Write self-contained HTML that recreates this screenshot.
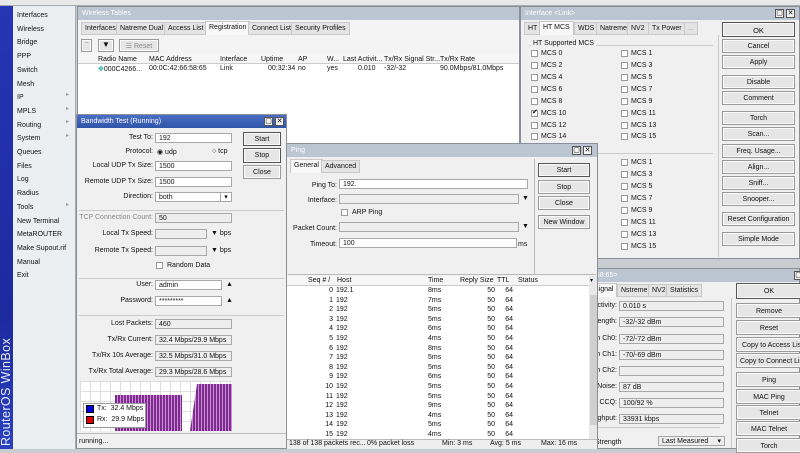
<!DOCTYPE html>
<html><head><meta charset="utf-8"><style>
*{box-sizing:border-box;margin:0;padding:0}
body{width:800px;height:449px;overflow:hidden;background:#c9ccd1;font-family:"Liberation Sans",sans-serif;font-size:7px;color:#111;position:relative}
.a{position:absolute;white-space:nowrap}
.win{position:absolute;background:#f0f0f0;border:1px solid #8a8f98}
.tt{position:absolute;left:0;right:0;top:0;height:13px;background:#bcc5d2;color:#fff;padding:3px 4px;font-size:7px}
.tt.act{background:linear-gradient(#4a6ec4,#2f55a8)}
.tb{position:absolute;top:2px;width:9px;height:9px;background:#f4f4f4;border:1px solid #555;font-size:7px;line-height:7px;text-align:center;color:#000}
.btn{position:absolute;background:#e6e6e6;border:1px solid #9a9a9a;text-align:center;font-size:7px;box-shadow:inset 0 0 0 1px #fafafa;white-space:nowrap;overflow:hidden}
.f{position:absolute;background:#fff;border:1px solid #a8a8a8;height:10px;padding:1px 3px;font-size:7px;line-height:7px;white-space:nowrap}
.d{background:#eeeeee}
.l{position:absolute;text-align:right;font-size:7px;white-space:nowrap}
.cb{position:absolute;width:7px;height:7px;background:#fff;border:1px solid #9a9a9a}
.tab{position:absolute;font-size:7px;padding:2px 3px;border:1px solid #c8c8c8;background:#e4e4e4;height:13px;white-space:nowrap}
.tab.on{background:#f8f8f8;border-bottom:none}
.hdr{position:absolute;background:#f6f6f6;border-bottom:1px solid #ccc;height:10px}
</style></head><body>
<div class="a" style="left:0;top:0;width:800px;height:6px;background:#e8e8e8;border-bottom:1px solid #aaa"></div>
<div class="a" style="left:0;top:6px;width:13px;height:443px;background:linear-gradient(180deg,#2535b5,#1c2a9e 70%,#2a40c0)"></div>
<div class="a" style="left:0;top:446px;transform:rotate(-90deg);transform-origin:0 0;color:#e8ecff;font-size:12.5px;line-height:12px;letter-spacing:0.4px">RouterOS WinBox</div>
<div class="a" style="left:13px;top:6px;width:63px;height:443px;background:#eceff2;border-right:1px solid #aaa"></div>
<div class="a" style="left:17px;top:9px;line-height:13.7px;font-size:7px">Interfaces<br>Wireless<br>Bridge<br>PPP<br>Switch<br>Mesh<br>IP<br>MPLS<br>Routing<br>System<br>Queues<br>Files<br>Log<br>Radius<br>Tools<br>New Terminal<br>MetaROUTER<br>Make Supout.rif<br>Manual<br>Exit</div>
<div class="a" style="left:66px;top:89px;line-height:13.7px;color:#999;font-size:6px">▸<br>▸<br>▸<br>▸<br><br><br><br><br>▸</div>

<div class="win" style="left:77px;top:6px;width:443px;height:140px;background:#f4f4f4">
<div class="tt">Wireless Tables</div>
<div class="tab" style="left:3px;top:15px">Interfaces</div>
<div class="tab" style="left:38px;top:15px">Natreme Dual</div>
<div class="tab" style="left:86px;top:15px">Access List</div>
<div class="tab on" style="left:127px;top:14px;height:14px">Registration</div>
<div class="tab" style="left:170px;top:15px">Connect List</div>
<div class="tab" style="left:213px;top:15px">Security Profiles</div>
<div class="btn" style="left:3px;top:32px;width:11px;height:13px;color:#999">−</div>
<div class="btn" style="left:20px;top:32px;width:16px;height:13px;font-size:8px">▼</div>
<div class="btn" style="left:41px;top:32px;width:40px;height:13px;color:#888;padding-top:2px">☰ Reset</div>
<div class="hdr" style="left:0;top:47px;width:441px"></div>
<div class="a" style="left:20px;top:49px">Radio Name</div><div class="a" style="left:71px;top:49px">MAC Address</div><div class="a" style="left:142px;top:49px">Interface</div><div class="a" style="left:183px;top:49px">Uptime</div><div class="a" style="left:220px;top:49px">AP</div><div class="a" style="left:249px;top:49px">W...</div><div class="a" style="left:265px;top:49px">Last Activit...</div><div class="a" style="left:306px;top:49px">Tx/Rx Signal Str...</div><div class="a" style="left:362px;top:49px">Tx/Rx Rate</div>
<div class="a" style="left:0;top:57px;width:441px;height:10px;background:#fff"></div>
<div class="a" style="left:20px;top:58px"><span style="color:#1a9">✥</span>000C4266...</div><div class="a" style="left:71px;top:58px">00:0C:42:66:58:65</div><div class="a" style="left:142px;top:58px">Link</div><div class="a" style="left:190px;top:58px">00:32:34</div><div class="a" style="left:220px;top:58px">no</div><div class="a" style="left:249px;top:58px">yes</div><div class="a" style="left:280px;top:58px">0.010</div><div class="a" style="left:306px;top:58px">-32/-32</div><div class="a" style="left:362px;top:58px">90.0Mbps/81.0Mbps</div>
<div class="a" style="left:0;top:67px;width:441px;height:71px;background:#fff"></div>
</div>

<div class="win" style="left:520px;top:6px;width:280px;height:253px">
<div class="tt">Interface &lt;Link&gt;</div><div class="tb" style="left:254px">▢</div><div class="tb" style="left:265px">✕</div>
<div class="tab" style="left:3px;top:15px">HT</div><div class="tab on" style="left:18px;top:14px;height:14px">HT MCS</div><div class="tab" style="left:53px;top:15px">WDS</div><div class="tab" style="left:75px;top:15px">Natreme</div><div class="tab" style="left:106px;top:15px">NV2</div><div class="tab" style="left:127px;top:15px">Tx Power</div><div class="tab" style="left:163px;top:15px;color:#999">...</div>
<div class="a" style="left:8px;top:38px;width:184px;border-top:1px solid #ccc"></div>
<div class="a" style="left:10px;top:33px;background:#f0f0f0;padding:0 2px">HT Supported MCS</div>
<div class="a" style="left:8px;top:146px;width:184px;border-top:1px solid #ccc"></div>
<div class="a" style="left:197px;top:28px;height:222px;border-left:1px solid #ccc"></div>
</div>
<div id="mcs"></div>

<div class="btn" style="left:722px;top:22px;width:73px;height:15px;padding-top:3px;border-color:#555;font-size:7.5px">OK</div>
<div class="btn" style="left:722px;top:39px;width:73px;height:14px;padding-top:3px">Cancel</div>
<div class="btn" style="left:722px;top:55px;width:73px;height:14px;padding-top:3px">Apply</div>
<div class="btn" style="left:722px;top:75px;width:73px;height:14px;padding-top:3px">Disable</div>
<div class="btn" style="left:722px;top:91px;width:73px;height:14px;padding-top:3px">Comment</div>
<div class="btn" style="left:722px;top:111px;width:73px;height:14px;padding-top:3px">Torch</div>
<div class="btn" style="left:722px;top:127px;width:73px;height:14px;padding-top:3px">Scan...</div>
<div class="btn" style="left:722px;top:144px;width:73px;height:14px;padding-top:3px">Freq. Usage...</div>
<div class="btn" style="left:722px;top:160px;width:73px;height:14px;padding-top:3px">Align...</div>
<div class="btn" style="left:722px;top:176px;width:73px;height:14px;padding-top:3px">Sniff...</div>
<div class="btn" style="left:722px;top:192px;width:73px;height:14px;padding-top:3px">Snooper...</div>
<div class="btn" style="left:722px;top:212px;width:73px;height:14px;padding-top:3px">Reset Configuration</div>
<div class="btn" style="left:722px;top:232px;width:73px;height:14px;padding-top:3px">Simple Mode</div>

<div class="win" style="left:585px;top:268px;width:215px;height:181px">
<div class="tt">...58:65&gt;</div><div class="tb" style="left:208px">▢</div>
<div class="tab on" style="left:4px;top:14px;height:14px">Signal</div><div class="tab" style="left:31px;top:15px">Nstreme</div><div class="tab" style="left:62px;top:15px">NV2</div><div class="tab" style="left:80px;top:15px">Statistics</div>
<div class="a" style="left:145px;top:29px;height:150px;border-left:1px solid #ccc"></div>
</div>
<div class="l" style="left:560px;top:302px;width:57px">Activity:</div><div class="f d" style="left:619px;top:301px;width:105px">0.010 s</div>
<div class="l" style="left:560px;top:318px;width:57px">Strength:</div><div class="f d" style="left:619px;top:317px;width:105px">-32/-32 dBm</div>
<div class="l" style="left:560px;top:335px;width:57px">Strength Ch0:</div><div class="f d" style="left:619px;top:334px;width:105px">-72/-72 dBm</div>
<div class="l" style="left:560px;top:351px;width:57px">Strength Ch1:</div><div class="f d" style="left:619px;top:350px;width:105px">-70/-69 dBm</div>
<div class="l" style="left:560px;top:367px;width:57px">Strength Ch2:</div><div class="f d" style="left:619px;top:366px;width:105px"></div>
<div class="l" style="left:560px;top:383px;width:57px">Noise:</div><div class="f d" style="left:619px;top:382px;width:105px">87 dB</div>
<div class="l" style="left:560px;top:399px;width:57px">Tx/Rx CCQ:</div><div class="f d" style="left:619px;top:398px;width:105px">100/92 %</div>
<div class="l" style="left:560px;top:415px;width:57px">Throughput:</div><div class="f d" style="left:619px;top:414px;width:105px">33931 kbps</div>
<div class="a" style="left:590px;top:427px;width:130px;border-top:1px solid #ccc"></div>
<div class="a" style="left:595px;top:439px">Strength</div>
<div class="f d" style="left:658px;top:436px;width:67px">Last Measured <span style="float:right">▾</span></div>
<div class="btn" style="left:736px;top:283px;width:66px;height:16px;padding-top:4px;border-color:#555">OK</div>
<div class="btn" style="left:736px;top:303px;width:66px;height:15px;padding-top:4px">Remove</div>
<div class="btn" style="left:736px;top:320px;width:66px;height:15px;padding-top:4px">Reset</div>
<div class="btn" style="left:736px;top:337px;width:66px;height:15px;padding-top:4px;text-align:left;padding-left:5px">Copy to Access List</div>
<div class="btn" style="left:736px;top:353px;width:66px;height:15px;padding-top:4px;text-align:left;padding-left:3px">Copy to Connect List</div>
<div class="btn" style="left:736px;top:372px;width:66px;height:15px;padding-top:4px">Ping</div>
<div class="btn" style="left:736px;top:389px;width:66px;height:15px;padding-top:4px">MAC Ping</div>
<div class="btn" style="left:736px;top:405px;width:66px;height:15px;padding-top:4px">Telnet</div>
<div class="btn" style="left:736px;top:421px;width:66px;height:15px;padding-top:4px">MAC Telnet</div>
<div class="btn" style="left:736px;top:438px;width:66px;height:15px;padding-top:4px">Torch</div>

<div class="win" style="left:286px;top:143px;width:312px;height:306px">
<div class="tt">Ping</div><div class="tb" style="left:285px">▢</div><div class="tb" style="left:296px">✕</div>
<div class="tab on" style="left:3px;top:15px;height:14px">General</div><div class="tab" style="left:34px;top:16px">Advanced</div>
<div class="a" style="left:247px;top:15px;height:115px;border-left:1px solid #bbb"></div>
<div class="a" style="left:1px;top:130px;width:308px;border-top:1px solid #bbb"></div>
</div>
<div class="l" style="left:290px;top:182px;width:47px">Ping To:</div><div class="f" style="left:339px;top:179px;width:189px">192.</div>
<div class="l" style="left:290px;top:197px;width:47px">Interface:</div><div class="f d" style="left:339px;top:194px;width:180px"></div><div class="a" style="left:522px;top:195px">▼</div>
<div class="cb" style="left:341px;top:209px"></div><div class="a" style="left:352px;top:209px">ARP Ping</div>
<div class="l" style="left:287px;top:225px;width:50px">Packet Count:</div><div class="f d" style="left:339px;top:222px;width:180px"></div><div class="a" style="left:522px;top:223px">▼</div>
<div class="l" style="left:290px;top:241px;width:47px">Timeout:</div><div class="f" style="left:339px;top:238px;width:178px">100</div><div class="a" style="left:518px;top:241px">ms</div>
<div class="btn" style="left:538px;top:163px;width:52px;height:14px;padding-top:3px;border-color:#555">Start</div>
<div class="btn" style="left:538px;top:180px;width:52px;height:14px;padding-top:3px">Stop</div>
<div class="btn" style="left:538px;top:196px;width:52px;height:14px;padding-top:3px">Close</div>
<div class="btn" style="left:538px;top:215px;width:52px;height:14px;padding-top:3px">New Window</div>
<div class="a" style="left:287px;top:276px;width:310px;height:163px;background:#fff"></div>
<div class="hdr" style="left:287px;top:276px;width:302px"></div>
<div class="a" style="left:308px;top:277px">Seq # /</div><div class="a" style="left:337px;top:277px">Host</div><div class="a" style="left:428px;top:277px">Time</div><div class="a" style="left:460px;top:277px">Reply Size</div><div class="a" style="left:497px;top:277px">TTL</div><div class="a" style="left:518px;top:277px">Status</div>
<div class="a" style="left:589px;top:276px;width:8px;height:163px;background:#e8e8e8"></div>
<div class="a" style="left:590px;top:295px;width:7px;height:130px;background:#cfcfcf"></div>
<div class="a" style="left:590px;top:277px;font-size:6px">▾</div>
<div id="rows"></div>
<div class="a" style="left:287px;top:439px;width:310px;height:10px;background:#eee;border-top:1px solid #bbb"></div>
<div class="a" style="left:289px;top:440px">138 of 138 packets rec...</div><div class="a" style="left:367px;top:440px">0% packet loss</div><div class="a" style="left:442px;top:440px">Min: 3 ms</div><div class="a" style="left:490px;top:440px">Avg: 5 ms</div><div class="a" style="left:541px;top:440px">Max: 16 ms</div>

<div class="win" style="left:76px;top:114px;width:211px;height:335px">
<div class="tt act">Bandwidth Test (Running)</div><div class="tb" style="left:187px">▢</div><div class="tb" style="left:198px">✕</div>
<div class="a" style="left:2px;top:95px;width:205px;border-top:1px solid #ccc"></div>
<div class="a" style="left:2px;top:163px;width:205px;border-top:1px solid #ccc"></div>
<div class="a" style="left:2px;top:200px;width:205px;border-top:1px solid #ccc"></div>
<div class="a" style="left:0;top:318px;width:209px;height:16px;border-top:1px solid #bbb;padding:4px 2px">running...</div>
</div>
<div class="btn" style="left:243px;top:132px;width:38px;height:14px;padding-top:3px;border-color:#555">Start</div>
<div class="btn" style="left:243px;top:148px;width:38px;height:15px;padding-top:3px;border-color:#555">Stop</div>
<div class="btn" style="left:243px;top:165px;width:38px;height:14px;padding-top:3px">Close</div>
<div id="bw"></div>
<div class="a" style="left:80px;top:381px;width:152px;height:50px;background-color:#fff;background-image:linear-gradient(90deg,#ddd 1px,transparent 1px),linear-gradient(#ddd 1px,transparent 1px);background-size:10px 10px"></div>
<div class="a" style="left:115px;top:395px;width:67px;height:36px;background:repeating-linear-gradient(90deg,#7a2d8c 0 2px,#d18bd9 2px 3px)"></div>
<div class="a" style="left:190px;top:384px;width:42px;height:47px;background:repeating-linear-gradient(90deg,#7a2d8c 0 2px,#d18bd9 2px 3px);clip-path:polygon(0 100%,7px 0,100% 0,100% 100%)"></div>
<div class="a" style="left:83px;top:403px;width:63px;height:25px;background:#fff;border:1px solid #999"></div>
<div class="a" style="left:86px;top:405px;width:8px;height:8px;background:#0000e0;border:1px solid #000"></div>
<div class="a" style="left:86px;top:416px;width:8px;height:8px;background:#e00000;border:1px solid #000"></div>
<div class="a" style="left:97px;top:405px">Tx:&nbsp; 32.4 Mbps</div>
<div class="a" style="left:97px;top:416px">Rx:&nbsp; 29.9 Mbps</div>
<script>
var h='';
var L=[[138,'Test To:','f','192',77],[152,'Protocol:','',''],[166,'Local UDP Tx Size:','f','1500',77],[182,'Remote UDP Tx Size:','f','1500',77],[197,'Direction:','f','both',77],[218,'TCP Connection Count:','f d','50',77],[234,'Local Tx Speed:','f d','',52],[251,'Remote Tx Speed:','f d','',52],[285,'User:','f','admin',67],[301,'Password:','f','*********',67],[324,'Lost Packets:','f d','460',77],[340,'Tx/Rx Current:','f d','32.4 Mbps/29.9 Mbps',77],[356,'Tx/Rx 10s Average:','f d','32.5 Mbps/31.0 Mbps',77],[372,'Tx/Rx Total Average:','f d','29.3 Mbps/28.6 Mbps',77]];
L.forEach(function(r){var c=r[1].indexOf('TCP')==0?'color:#888;':'';h+='<div class="l" style="'+c+'left:78px;top:'+(r[0]-4)+'px;width:75px">'+r[1]+'</div>';if(r[2])h+='<div class="'+r[2]+'" style="left:155px;top:'+(r[0]-5)+'px;width:'+r[4]+'px">'+r[3]+'</div>';});
h+='<div class="a" style="left:157px;top:148px">◉ udp</div><div class="a" style="left:212px;top:148px">○ tcp</div>';
h+='<div class="f" style="left:220px;top:192px;width:12px;text-align:center;padding:1px 0">▾</div>';
h+='<div class="a" style="left:211px;top:230px">▼ bps</div><div class="a" style="left:211px;top:247px">▼ bps</div>';
h+='<div class="a" style="left:226px;top:281px">▲</div><div class="a" style="left:226px;top:297px">▲</div>';
h+='<div class="cb" style="left:156px;top:262px"></div><div class="a" style="left:167px;top:262px">Random Data</div>';
document.getElementById('bw').innerHTML=h;
var m='';var ys=[54,66,78,90,102,114,126,137];
ys.forEach(function(y,i){m+='<div class="cb" style="left:531px;top:'+(y-4)+'px"></div><div class="a" style="left:541px;top:'+(y-4)+'px">MCS '+(i*2)+'</div><div class="cb" style="left:621px;top:'+(y-4)+'px"></div><div class="a" style="left:631px;top:'+(y-4)+'px">MCS '+(i*2+1)+'</div>';});
[163,175,187,199,211,223,235,247].forEach(function(y,i){m+='<div class="cb" style="left:621px;top:'+(y-4)+'px"></div><div class="a" style="left:631px;top:'+(y-4)+'px">MCS '+(i*2+1)+'</div>';});
m+='<div class="a" style="left:532px;top:108px;font-size:7px">✔</div>';
document.getElementById('mcs').innerHTML=m;
var t=[8,7,5,5,6,4,8,5,5,6,5,5,9,4,5,4,5],r='';
for(var i=0;i<16;i++){var y=287+i*9.6;r+='<div class="a" style="left:300px;top:'+y+'px;width:33px;text-align:right">'+i+'</div><div class="a" style="left:336px;top:'+y+'px">19'+(i<1?'2.1':'2')+'</div><div class="a" style="left:428px;top:'+y+'px">'+t[i]+'ms</div><div class="a" style="left:470px;top:'+y+'px;width:25px;text-align:right">50</div><div class="a" style="left:500px;top:'+y+'px;width:13px;text-align:right">64</div>';}
document.getElementById('rows').innerHTML=r;
</script>
</body></html>
